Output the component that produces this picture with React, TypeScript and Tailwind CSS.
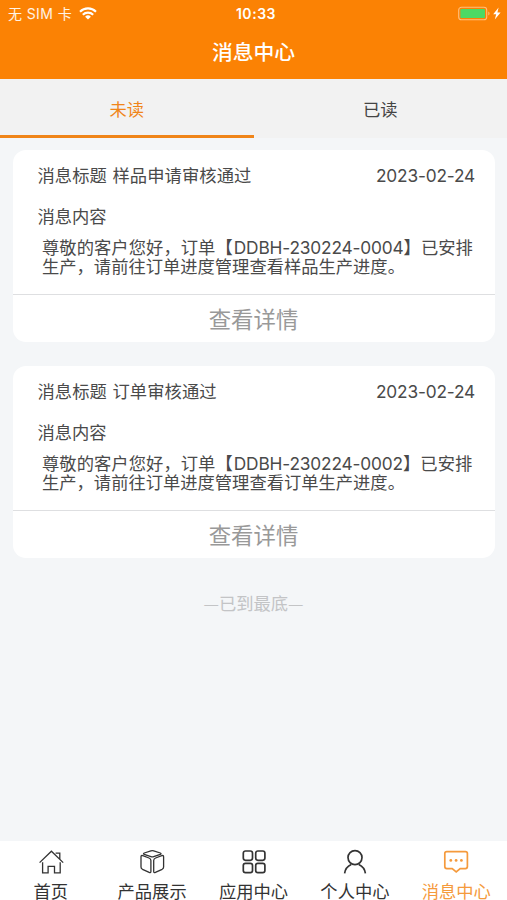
import { ReactNode } from "react";
import clsx from "clsx";

interface Message {
  id: number;
  title: string;
  date: string;
  code: string;
  after: string;
  rest: string;
}

const messages: Message[] = [
  {
    id: 1,
    title: "样品申请审核通过",
    date: "2023-02-24",
    code: "DDBH-230224-0004",
    after: "】已安排",
    rest: "生产，请前往订单进度管理查看样品生产进度。",
  },
  {
    id: 2,
    title: "订单审核通过",
    date: "2023-02-24",
    code: "DDBH-230224-0002",
    after: "】已安排",
    rest: "生产，请前往订单进度管理查看订单生产进度。",
  },
];

function StatusBar() {
  return (
    <div className="grid h-[27px] grid-cols-3 items-center pl-[8px] pr-[5px] text-[14px] text-white/90">
      <div className="flex items-center">
        <span className="tracking-[0.4px]">无 SIM 卡</span>
        <svg className="ml-[7px] h-[13px] w-[18px]" viewBox="0 0 18 13" fill="none" stroke="#fff" strokeWidth="2.1">
          <path d="M1 4.7a11.4 11.4 0 0 1 16 0" />
          <path d="M3.8 7.7a7.5 7.5 0 0 1 10.4 0" />
          <path d="M9 12.6 6.1 9.7a4.2 4.2 0 0 1 5.8 0Z" fill="#fff" stroke="none" />
        </svg>
      </div>
      <span className="pl-[2px] text-center font-semibold tracking-[0.55px] text-white">10:33</span>
      <div className="flex items-center justify-end">
        <svg className="h-[15px] w-[44px]" viewBox="0 0 44 15">
          <rect x="0.7" y="1.2" width="28" height="12.6" rx="2.8" fill="none" stroke="#ffc07c" strokeWidth="1.1" />
          <rect x="2.4" y="2.9" width="24.6" height="9.2" rx="1.2" fill="#4cd964" />
          <path d="M30.3 5.5c1.7.6 1.7 3.4 0 4z" fill="#ffc07c" />
          <path d="M40.6 1.6 35.2 8.2h3l-1.4 5.4 5.8-7.2h-3.2z" fill="#fff" />
        </svg>
      </div>
    </div>
  );
}

function MessageCard({ message }: { message: Message }) {
  return (
    <div className="h-[192px] w-[482px] rounded-[13px] bg-white text-[17.3px] text-[#4a4a4a]">
      <div className="flex h-[51px] items-center justify-between pl-[25px] pr-[19.5px]">
        <span className="tracking-[0.09px] [word-spacing:0.5px]">消息标题 {message.title}</span>
        <span className="tracking-[-0.18px]">{message.date}</span>
      </div>
      <div className="flex h-[31px] items-center pl-[25px]">消息内容</div>
      <div className="h-[62px] whitespace-nowrap pl-[29.5px] pt-[6px] leading-[19.3px]">
        <p className="tracking-[0.06px]">
          尊敬的客户您好，订单【<span className="ml-[1px] tracking-[-0.16px]">{message.code}</span>
          {message.after}
        </p>
        <p>{message.rest}</p>
      </div>
      <button className="flex h-[48px] w-full items-center justify-center border-t border-[#dedfe1] pt-[2px] text-[22.4px] text-[#999]">
        查看详情
      </button>
    </div>
  );
}

interface NavItemProps {
  label: string;
  active?: boolean;
  children: ReactNode;
}

function NavItem({ label, active, children }: NavItemProps) {
  return (
    <div className={clsx("flex flex-1 flex-col items-center pt-[8px]", active ? "text-[#f59a3c]" : "text-[#333]")}>
      <svg className="h-[26px] w-[26px] shrink-0" viewBox="0 0 26 26" fill="none" stroke="currentColor" strokeWidth="1.3">
        {children}
      </svg>
      <span className="mt-[8px] text-[17.3px] leading-[17px]">{label}</span>
    </div>
  );
}

export default function App() {
  return (
    <div className="flex h-[900px] w-[507px] flex-col bg-[#f4f6f8] font-['Inter','Noto_Sans_CJK_SC',sans-serif]">
      <header className="h-[79px] bg-[#fb8204]">
        <StatusBar />
        <h1 className="flex h-[51px] items-center justify-center text-[20.8px] font-medium text-white">消息中心</h1>
      </header>

      <div className="flex h-[59px] bg-[#f2f2f2] text-[17.3px]">
        <div className="flex flex-1 items-center justify-center border-b-[3px] border-[#f08519] pt-[5px] text-[#f08519]">
          未读
        </div>
        <div className="flex flex-1 items-center justify-center border-b-[3px] border-transparent pt-[5px] text-[#444]">
          已读
        </div>
      </div>

      <main className="flex flex-1 flex-col items-center gap-[24px] pt-[12px]">
        {messages.map((message) => (
          <MessageCard key={message.id} message={message} />
        ))}
        <p className="mt-[8px] font-['Noto_Sans_CJK_SC',sans-serif] text-[17.3px] leading-[26px] text-[#c3c4c6]">
          —已到最底—
        </p>
      </main>

      <nav className="flex h-[59px] overflow-clip bg-white">
        <NavItem label="首页">
          <path d="M1.6 13.6 13.4 2.2l11.8 11.4M17.6 4.2h4.2v5.8M4.6 13.2v10.6h5.5v-6.4h6.4v6.4h5.7V13.2" />
        </NavItem>
        <NavItem label="产品展示">
          <path d="M11.9 1.9q1.4-.4 2.8 0l6.6 2.1q1.5.6 0 1.3l-6.6 2.3q-1.4.5-2.8 0L5.3 5.3q-1.5-.7 0-1.3z" />
          <path d="M3.8 6.6 10 9q1.9.8 1.9 2.6v10.8q0 1.7-1.7 1l-6.7-3.1Q2 19.5 2 18V7.8q0-1.7 1.8-1.2Z" />
          <path d="M22.8 6.6 16.6 9q-1.9.8-1.9 2.6v10.8q0 1.7 1.7 1l6.7-3.1q1.5-.8 1.5-2.3V7.8q0-1.7-1.8-1.2Z" />
        </NavItem>
        <NavItem label="应用中心">
          <g strokeWidth="1.7">
            <rect x="2.3" y="2" width="9.2" height="9.3" rx="2.2" />
            <rect x="14.7" y="2" width="9.2" height="9.3" rx="2.2" />
            <rect x="2.3" y="14.3" width="9.2" height="9.3" rx="2.2" />
            <rect x="14.7" y="14.3" width="9.2" height="9.3" rx="2.2" />
          </g>
        </NavItem>
        <NavItem label="个人中心">
          <g strokeWidth="1.7">
            <circle cx="13" cy="8.6" r="7" />
            <path d="M2.6 24.4c.5-4 2.9-7.2 6.6-8.9M23.4 24.4c-.5-4-2.9-7.2-6.6-8.9" />
          </g>
        </NavItem>
        <NavItem label="消息中心" active>
          <path
            d="M3.8 2.6h18.6q2 0 2 2v13q0 2-2 2h-5.2l-4 3.2-4-3.2H3.8q-2 0-2-2v-13q0-2 2-2Z"
            strokeWidth="1.7"
          />
          <g fill="currentColor" stroke="none">
            <circle cx="7.8" cy="11.4" r="1.4" />
            <circle cx="13.1" cy="11.4" r="1.4" />
            <circle cx="18.4" cy="11.4" r="1.4" />
          </g>
        </NavItem>
      </nav>
    </div>
  );
}
